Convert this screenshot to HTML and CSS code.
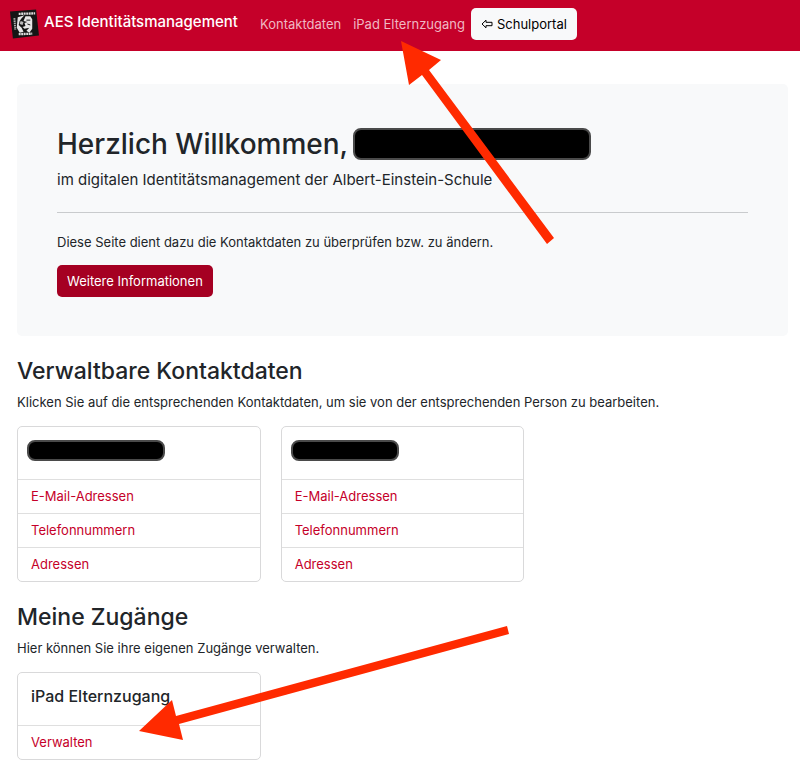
FILE: index.html
```html
<!DOCTYPE html>
<html lang="de">
<head>
<meta charset="utf-8">
<meta name="viewport" content="width=device-width, initial-scale=1">
<title>AES Identitätsmanagement</title>
<link rel="stylesheet" href="styles.css">
</head>
<body>
<nav class="navbar">
  <a class="brand" href="#">
    <svg class="logo" viewBox="0 0 30 30" aria-hidden="true">
      <path fill="#151515" d="M0 2 27 0 30 27 3 30Z"/>
      <path fill="none" stroke="#ddd" stroke-width="2.4" stroke-dasharray="2 .6" d="M9 4.500 26 4M9 25.500 23 25"/>
      <path fill="none" stroke="#aaa" stroke-width="2" stroke-dasharray="1.600 .7" d="M4.500 9 5.500 21"/>
      <path fill="#e6e6e6" d="M8 8 15 6 12 9 10 12 9 16 12 19 14 23 10 24 7 19ZM16 7 21 7 23 10 23 20 20 24 17 22 20 19 15 20 13 18 16 17 15 14 18 13 14 12Z"/>
      <path fill="#bbb" d="M11 12 14 13 13 16 10 15Z"/>
      <path fill="none" stroke="#151515" d="M17 11 21 11M18 15 21 16"/>
    </svg>
    <span>AES Identitätsmanagement</span>
  </a>
  <div class="nav-links">
    <a href="#kontaktdaten">Kontaktdaten</a>
    <a href="#zugaenge">iPad Elternzugang</a>
  </div>
  <a class="button button-light" href="#">
    <svg class="back" viewBox="0 0 12 10" aria-hidden="true"><path d="M1 5 5 1.200V3.300H11V6.700H5V8.800Z"/></svg>
    <span>Schulportal</span>
  </a>
</nav>

<main>
  <section class="hero">
    <h1>Herzlich Willkommen, <span class="redacted redacted-title"></span></h1>
    <p class="lead">im digitalen Identitätsmanagement der Albert-Einstein-Schule</p>
    <hr>
    <p>Diese Seite dient dazu die Kontaktdaten zu überprüfen bzw. zu ändern.</p>
    <a class="button button-primary" href="#">Weitere Informationen</a>
  </section>

  <section class="group" id="kontaktdaten">
    <h2>Verwaltbare Kontaktdaten</h2>
    <p>Klicken Sie auf die entsprechenden Kontaktdaten, um sie von der entsprechenden Person zu bearbeiten.</p>
    <div class="cards">
      <article class="card">
        <div class="card-head"><span class="redacted redacted-long"></span></div>
        <ul>
          <li><a href="#">E-Mail-Adressen</a></li>
          <li><a href="#">Telefonnummern</a></li>
          <li><a href="#">Adressen</a></li>
        </ul>
      </article>
      <article class="card">
        <div class="card-head"><span class="redacted redacted-short"></span></div>
        <ul>
          <li><a href="#">E-Mail-Adressen</a></li>
          <li><a href="#">Telefonnummern</a></li>
          <li><a href="#">Adressen</a></li>
        </ul>
      </article>
    </div>
  </section>

  <section class="group" id="zugaenge">
    <h2>Meine Zugänge</h2>
    <p>Hier können Sie ihre eigenen Zugänge verwalten.</p>
    <div class="cards">
      <article class="card">
        <div class="card-head"><h3>iPad Elternzugang</h3></div>
        <ul>
          <li><a href="#">Verwalten</a></li>
        </ul>
      </article>
    </div>
  </section>
</main>

<svg class="arrow arrow-nav" viewBox="0 0 154 204" aria-hidden="true"><path d="M0 0 40 19 28 29 153 197 146 203 21 34 8 44Z"/></svg>
<svg class="arrow arrow-manage" viewBox="0 0 370 114" aria-hidden="true"><path d="M0 105 33 74 37 90 368 0 370 8 40 98 44 114Z"/></svg>
</body>
</html>
```
FILE: styles.css
```css
* {
  box-sizing: border-box;
}

body {
  position: relative;
  margin: 0;
  background: #fff;
  color: #212529;
  font: 13px/20px Inter, "Liberation Sans", sans-serif;
}

a {
  color: #c50029;
  text-decoration: none;
}

h1, h2, h3, p, ul {
  margin: 0;
  padding: 0;
  font-weight: 500;
}

p, ul {
  font-weight: 400;
}

.navbar {
  display: flex;
  align-items: center;
  min-height: 51px;
  padding: 8px 10px 11px;
  background: #c50029;
}

.brand {
  display: flex;
  align-items: center;
  gap: 5px;
  margin-right: 22px;
  color: #fff;
  font-size: 15px;
  font-weight: 500;
}

.brand span {
  padding-bottom: 4px;
}

.logo {
  width: 29px;
  height: 30px;
}

.nav-links {
  display: flex;
  gap: 12px;
  margin-right: 6px;
}

.nav-links a {
  color: #f0b8c3;
}

.button {
  display: inline-flex;
  align-items: center;
  gap: 4px;
  height: 32px;
  padding: 0 10px;
  border-radius: 5px;
}

.button-light {
  background: #f8f9fa;
  color: #000;
}

.button-primary {
  margin-top: 13px;
  background: #a50022;
  color: #fff;
}

.back {
  width: 12px;
  height: 10px;
  fill: none;
  stroke: #000;
}

main {
  padding: 33px 12px 20px 17px;
}

.hero {
  padding: 40px 40px 39px;
  border-radius: 5px;
  background: #f8f9fa;
}

h1 {
  display: flex;
  align-items: center;
  gap: 5px;
  font-size: 28px;
  line-height: 40px;
}

.lead {
  margin-top: 4px;
  font-size: 15px;
  line-height: 24px;
}

hr {
  margin: 20px 0 19px;
  border: 0;
  border-top: 1px solid #c9cbcd;
}

.group {
  margin-top: 19px;
}

h2 {
  margin-bottom: 5px;
  font-size: 23px;
  line-height: 32px;
}

h3 {
  font-size: 16px;
  line-height: 20px;
}

.cards {
  display: grid;
  grid-template-columns: repeat(3, 1fr);
  gap: 20px;
  margin-top: 14px;
}

.card {
  border: 1px solid #d9d9da;
  border-radius: 5px;
}

.card-head {
  height: 52px;
  padding: 13px;
}

.card ul {
  list-style: none;
}

.card li {
  height: 34px;
  padding: 6px 13px;
  border-top: 1px solid #dfdfdf;
}

.redacted {
  display: block;
  height: 21px;
  border: 2px solid #4a4a4a;
  border-radius: 8px;
  background: #000;
}

.redacted-title {
  width: 238px;
  height: 32px;
}

.redacted-long {
  width: 138px;
  margin-left: -4px;
}

.redacted-short {
  width: 108px;
  margin-left: -4px;
}

.arrow {
  position: absolute;
  fill: #ff2a00;
  pointer-events: none;
}

.arrow-nav {
  top: 41px;
  left: 401px;
  width: 154px;
}

.arrow-manage {
  top: 626px;
  left: 139px;
  width: 370px;
}
```
